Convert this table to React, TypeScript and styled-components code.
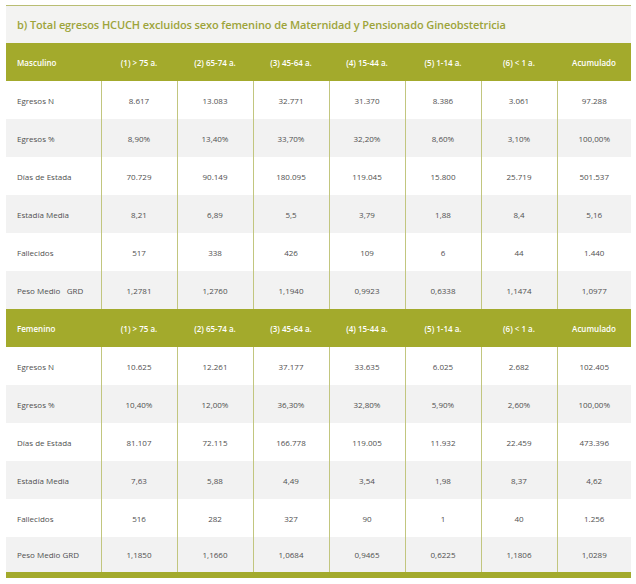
/**
 * Egresos table
 */
import * as React from 'react';
import styled, { createGlobalStyle, css } from 'styled-components';

const olive = '#a3aa2c';

const GlobalStyle = createGlobalStyle`
  body {
    margin: 0;
    background: #ffffff;
    font-family: 'Open Sans', 'DejaVu Sans', sans-serif;
  }
`;

type Row = { label: string; values: string[] };
type Section = { title: string; rows: Row[] };

const columns = [
  '(1) > 75 a.',
  '(2) 65-74 a.',
  '(3) 45-64 a.',
  '(4) 15-44 a.',
  '(5) 1-14 a.',
  '(6) < 1 a.',
  'Acumulado',
];

const sections: Section[] = [
  {
    title: 'Masculino',
    rows: [
      { label: 'Egresos N', values: ['8.617', '13.083', '32.771', '31.370', '8.386', '3.061', '97.288'] },
      { label: 'Egresos %', values: ['8,90%', '13,40%', '33,70%', '32,20%', '8,60%', '3,10%', '100,00%'] },
      { label: 'Días de Estada', values: ['70.729', '90.149', '180.095', '119.045', '15.800', '25.719', '501.537'] },
      { label: 'Estadía Media', values: ['8,21', '6,89', '5,5', '3,79', '1,88', '8,4', '5,16'] },
      { label: 'Fallecidos', values: ['517', '338', '426', '109', '6', '44', '1.440'] },
      { label: 'Peso Medio\u00a0\u00a0\u00a0GRD', values: ['1,2781', '1,2760', '1,1940', '0,9923', '0,6338', '1,1474', '1,0977'] },
    ],
  },
  {
    title: 'Femenino',
    rows: [
      { label: 'Egresos N', values: ['10.625', '12.261', '37.177', '33.635', '6.025', '2.682', '102.405'] },
      { label: 'Egresos %', values: ['10,40%', '12,00%', '36,30%', '32,80%', '5,90%', '2,60%', '100,00%'] },
      { label: 'Días de Estada', values: ['81.107', '72.115', '166.778', '119.005', '11.932', '22.459', '473.396'] },
      { label: 'Estadía Media', values: ['7,63', '5,88', '4,49', '3,54', '1,98', '8,37', '4,62'] },
      { label: 'Fallecidos', values: ['516', '282', '327', '90', '1', '40', '1.256'] },
      { label: 'Peso Medio GRD', values: ['1,1850', '1,1660', '1,0684', '0,9465', '0,6225', '1,1806', '1,0289'] },
    ],
  },
];

const Wrapper = styled.div`
  width: 625px;
  padding: 5px 0 0 6px;
`;

const TitleBand = styled.div`
  height: 37px;
  border-top: 1px solid #b9bd73;
  background: #f3f3f2;
  display: flex;
  align-items: center;
  padding-left: 11px;
`;

const Title = styled.h2`
  margin: 0;
  font-size: 11px;
  font-weight: 600;
  color: #9da43a;
  letter-spacing: -0.1px;
`;

const Table = styled.table`
  width: 625px;
  border-collapse: collapse;
  table-layout: fixed;
  border-bottom: 6px solid ${olive};
`;

const HeadRow = styled.tr`
  height: 38px;
  background: ${olive};
`;

const HeadCell = styled.th<{ first?: boolean }>`
  padding: 0;
  font-size: 8px;
  font-weight: 600;
  color: #ffffff;
  text-align: center;
  ${(p) =>
    p.first &&
    css`
      text-align: left;
      padding-left: 11px;
    `}
`;

const BodyRow = styled.tr<{ shaded?: boolean }>`
  height: 38px;
  background: ${(p) => (p.shaded ? '#f2f2f2' : '#ffffff')};
`;

const Cell = styled.td<{ first?: boolean }>`
  padding: 0;
  font-size: 8px;
  color: #505050;
  text-align: center;
  border-left: 1px solid #c2c67f;
  ${(p) =>
    p.first &&
    css`
      text-align: left;
      padding-left: 11px;
      border-left: none;
    `}
`;

const widths = [95, 76, 76, 76, 76, 76, 76, 74];

export default function App() {
  return (
    <>
      <GlobalStyle />
      <Wrapper>
        <TitleBand>
          <Title>
            b) Total egresos HCUCH excluidos sexo femenino de Maternidad y Pensionado Gineobstetricia
          </Title>
        </TitleBand>
        <Table>
          <colgroup>
            {widths.map((w, i) => (
              <col key={i} style={{ width: w }} />
            ))}
          </colgroup>
          {sections.map((section) => (
            <tbody key={section.title}>
              <HeadRow>
                <HeadCell first>{section.title}</HeadCell>
                {columns.map((c) => (
                  <HeadCell key={c}>{c}</HeadCell>
                ))}
              </HeadRow>
              {section.rows.map((row, i) => (
                <BodyRow key={row.label} shaded={i % 2 === 1}>
                  <Cell first>{row.label}</Cell>
                  {row.values.map((v, j) => (
                    <Cell key={j}>{v}</Cell>
                  ))}
                </BodyRow>
              ))}
            </tbody>
          ))}
        </Table>
      </Wrapper>
    </>
  );
}
